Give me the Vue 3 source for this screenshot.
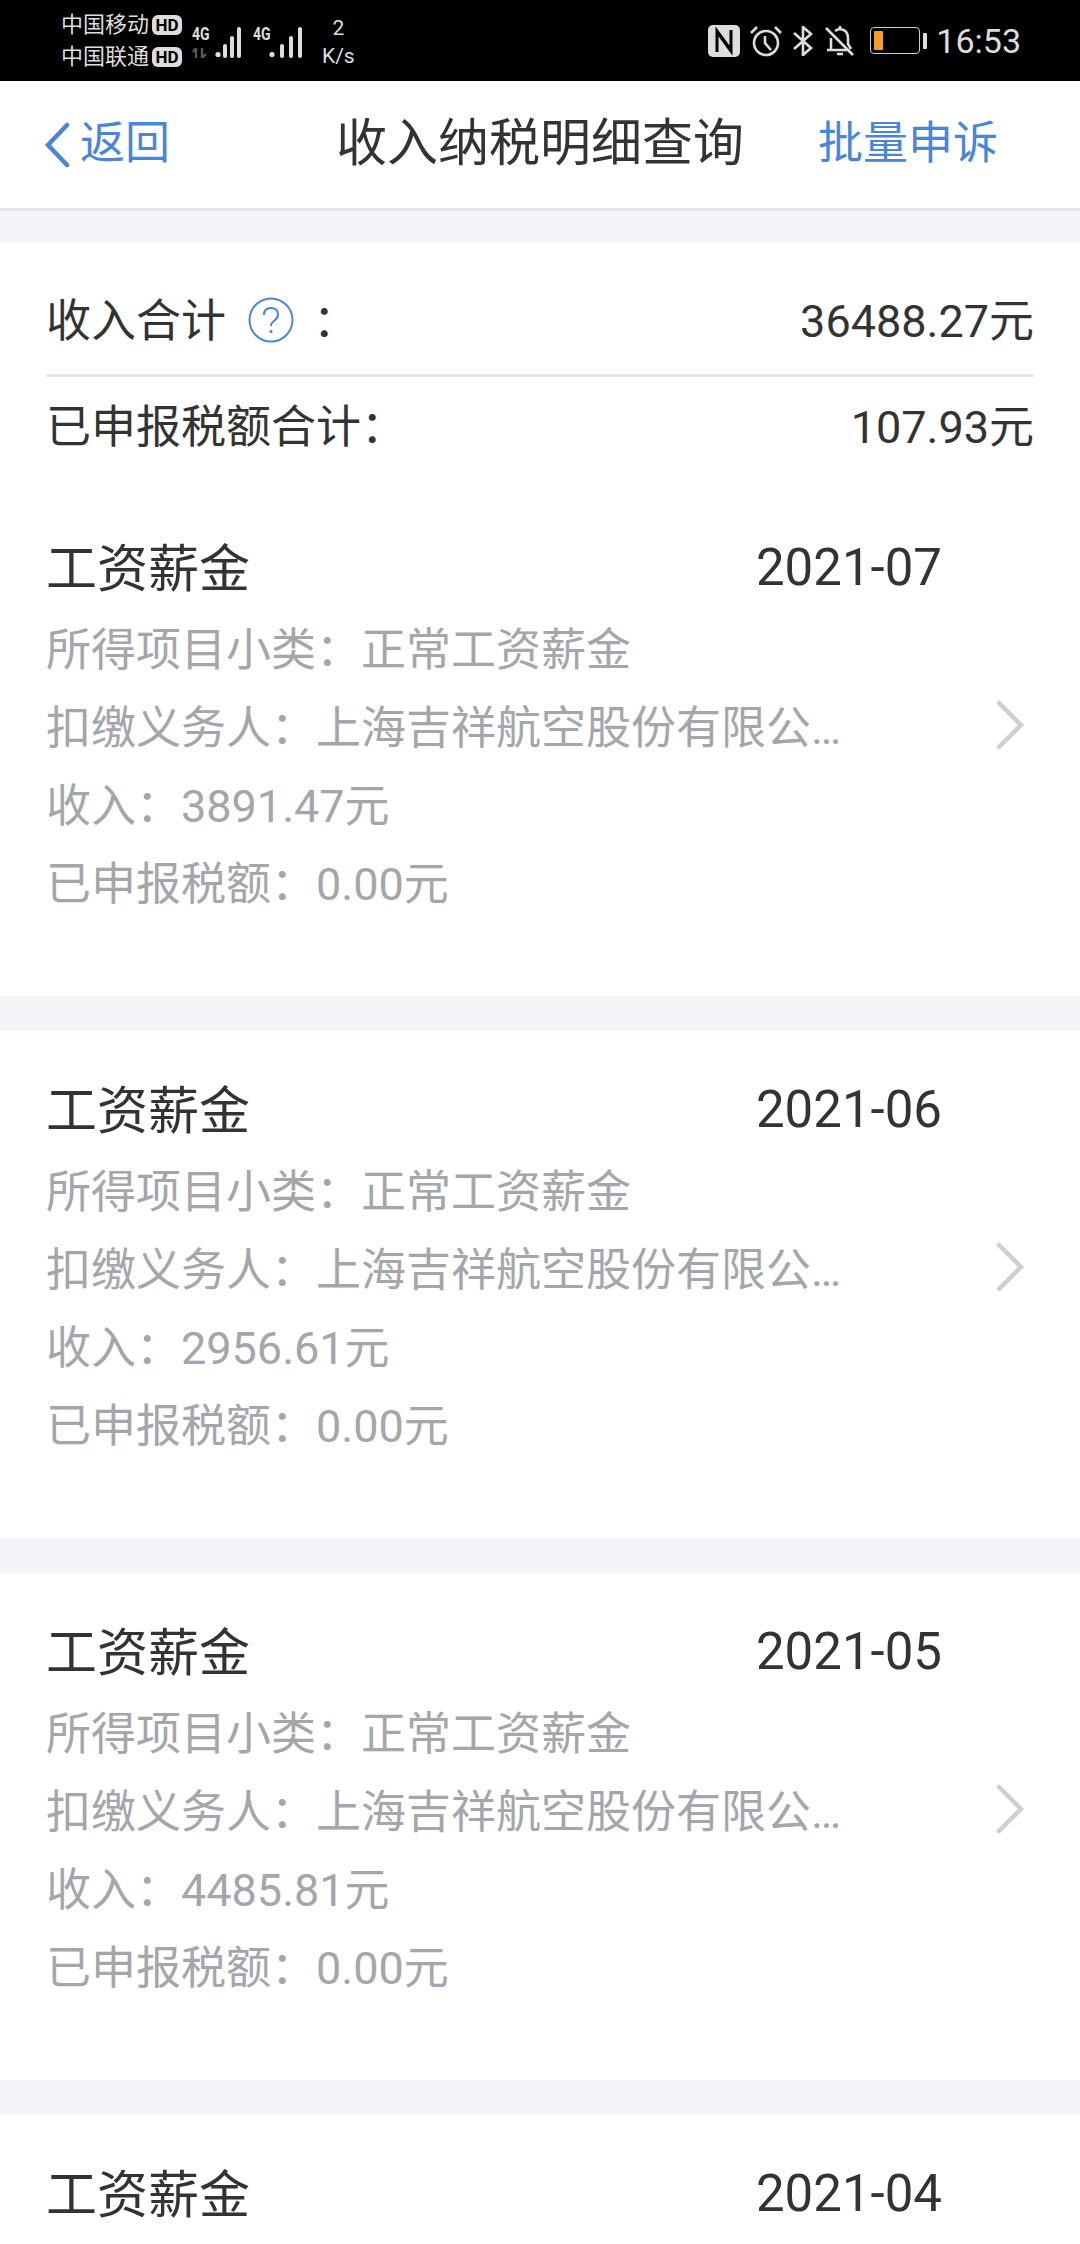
<script setup>
const records = [
	{month: '2021-07', income: '3891.47'},
	{month: '2021-06', income: '2956.61'},
	{month: '2021-05', income: '4485.81'},
	{month: '2021-04'},
];
</script>

<template>
	<div class="page">
		<div class="status">
			<div class="status-left">
				<div class="carriers">
					<div class="carrier"><span>中国移动</span><b class="hd">HD</b></div>
					<div class="carrier"><span>中国联通</span><b class="hd">HD</b></div>
				</div>
				<div class="signal">
					<span class="net">4G</span>
					<svg class="arrows" width="16" height="10" viewBox="0 0 16 10">
						<path d="M4 0 L4 10 M1 4 L4 0 M10 0 L10 10 L14 6" fill="none" stroke="#555" stroke-width="2.4" />
					</svg>
					<svg class="bars" width="26" height="31" viewBox="0 0 26 31">
						<circle cx="3" cy="27.5" r="2.6" fill="#ddd" />
						<rect x="8" y="17" width="4" height="14" rx="2" fill="#ddd" />
						<rect x="15" y="9" width="4" height="22" rx="2" fill="#ddd" />
						<rect x="22" y="0" width="4" height="31" rx="2" fill="#ddd" />
					</svg>
				</div>
				<div class="signal second">
					<span class="net">4G</span>
					<svg class="bars" width="33" height="31" viewBox="0 0 33 31">
						<circle cx="3" cy="27.5" r="2.6" fill="#ddd" />
						<rect x="11" y="17" width="4" height="14" rx="2" fill="#ddd" />
						<rect x="20" y="9" width="4" height="22" rx="2" fill="#ddd" />
						<rect x="29" y="0" width="4" height="31" rx="2" fill="#ddd" />
					</svg>
				</div>
				<div class="speed"><span>2</span><span>K/s</span></div>
			</div>
			<div class="status-right">
				<svg class="ic-nfc" width="32" height="32" viewBox="0 0 32 32">
					<rect x="0" y="0" width="32" height="32" rx="5" fill="#ddd" />
					<path d="M9 27 V6 L22 24 M23 5 V26 L10 8" fill="none" stroke="#000" stroke-width="3" />
				</svg>
				<svg class="ic-alarm" width="32" height="32" viewBox="0 0 32 32" fill="none" stroke="#ddd" stroke-width="2.6">
					<circle cx="16" cy="18" r="12" />
					<path d="M15 11 V18 L21 25 M1 8 L7 2 M31 8 L25 2" />
				</svg>
				<svg class="ic-bt" width="20" height="30" viewBox="0 0 20 30" fill="none" stroke="#ddd" stroke-width="2.6">
					<path d="M1 7 L18 22 L10 29 V1 L18 8 L1 23" />
				</svg>
				<svg class="ic-bell" width="30" height="32" viewBox="0 0 30 32" fill="none" stroke="#ddd" stroke-width="2.6">
					<path d="M2 25 H23 M6 24 V13 M10 6 Q13 4 15 4 Q23 5 23 13 V19 L26 24 M12 29 H18 M15 4 V1 M1 3 L28 30" />
				</svg>
				<div class="battery-wrap">
					<div class="battery"><i class="level"></i></div>
					<i class="cap"></i>
				</div>
				<span class="clock">16:53</span>
			</div>
		</div>

		<div class="nav">
			<div class="back">
				<svg width="26" height="46" viewBox="0 0 26 46">
					<path d="M23 3 L4 23 L23 43" fill="none" stroke="#4a86d8" stroke-width="4.5" stroke-linecap="round" />
				</svg>
				<span class="nav-text">返回</span>
			</div>
			<div class="nav-title nav-text">收入纳税明细查询</div>
			<div class="nav-action nav-text">批量申诉</div>
		</div>

		<div class="summary">
			<div class="sum-row first">
				<div class="sum-label">
					<span>收入合计</span>
					<svg class="help" width="46" height="46" viewBox="0 0 46 46">
						<circle cx="23" cy="23" r="21.5" fill="none" stroke="#4a86d8" stroke-width="2" />
						<path d="M16 18 Q16 11 23 11 Q30 11 30 17.5 Q30 21 26.5 23.5 Q23 26 23 29" fill="none" stroke="#4a86d8" stroke-width="2" />
						<circle cx="23" cy="34.5" r="1.6" fill="#4a86d8" />
					</svg>
					<span class="colon">：</span>
				</div>
				<span>36488.27元</span>
			</div>
			<div class="sum-row second">
				<span>已申报税额合计：</span>
				<span>107.93元</span>
			</div>
		</div>

		<div v-for="r in records" :key="r.month" class="card">
			<div class="card-row">
				<div class="card-body">
					<div class="card-head">
						<span class="card-title">工资薪金</span>
						<span class="card-date">{{ r.month }}</span>
					</div>
					<template v-if="r.income">
						<div class="line">所得项目小类：正常工资薪金</div>
						<div class="line">扣缴义务人：上海吉祥航空股份有限公…</div>
						<div class="line">收入：{{ r.income }}元</div>
						<div class="line">已申报税额：0.00元</div>
					</template>
				</div>
				<svg v-if="r.income" class="chevron" width="30" height="50" viewBox="0 0 30 50">
					<path d="M4 3 L26 25 L4 47" fill="none" stroke="#cfcfcf" stroke-width="4.5" stroke-linecap="round" />
				</svg>
			</div>
		</div>
	</div>
</template>

<style>
body {
	background: #f4f5f9;
}
</style>

<style scoped>
.page {
	width: 1080px;
	height: 2244px;
	overflow: hidden;
	background: #f4f5f9;
	font-family: Roboto, "Noto Sans CJK SC", sans-serif;
	color: #333;
}

.status {
	height: 81px;
	background: #000;
	color: #ddd;
	display: flex;
	justify-content: space-between;
	align-items: center;
	padding: 0 59px 0 61px;
}
.status-left,
.status-right {
	display: flex;
	align-items: center;
}
.carriers {
	display: flex;
	flex-direction: column;
	gap: 3px;
}
.carrier {
	display: flex;
	align-items: center;
	gap: 3px;
	font-size: 22px;
	line-height: 29px;
}
.hd {
	background: #ddd;
	color: #000;
	font-size: 17px;
	line-height: 20px;
	height: 20px;
	width: 30px;
	border-radius: 6px;
	text-align: center;
}
.signal {
	position: relative;
	display: flex;
	align-items: flex-end;
	height: 32px;
	width: 49px;
	margin-left: 10px;
	margin-top: 2px;
	justify-content: flex-end;
}
.signal.second {
	margin-left: 12px;
}
.net {
	position: absolute;
	left: 0;
	top: 0;
	font-size: 18px;
	line-height: 16px;
	font-weight: 700;
	transform: scaleX(0.78);
	transform-origin: left;
}
.arrows {
	position: absolute;
	left: 0;
	bottom: 0;
}
.speed {
	display: flex;
	flex-direction: column;
	align-items: center;
	font-size: 21px;
	line-height: 28px;
	margin-left: 20px;
	margin-top: 2px;
}
.ic-alarm {
	margin-left: 10px;
}
.ic-bt {
	margin-left: 11px;
}
.ic-bell {
	margin-left: 12px;
}
.battery-wrap {
	display: flex;
	align-items: center;
	gap: 3px;
	margin-left: 15px;
}
.battery {
	width: 50px;
	height: 27px;
	border: 1.5px solid #ccc;
	border-radius: 4px;
	padding: 3px;
	box-sizing: border-box;
}
.level {
	display: block;
	width: 9px;
	height: 100%;
	background: #f5a020;
	border-radius: 1px;
}
.cap {
	display: block;
	width: 4px;
	height: 16px;
	background: #ddd;
	border-radius: 1px;
}
.clock {
	font-size: 34px;
	margin-left: 9px;
}

.nav {
	height: 127px;
	background: #fff;
	border-bottom: 3px solid #e4e6eb;
	display: grid;
	grid-template-columns: 292px auto 1fr;
	align-items: center;
	padding: 0 82px 0 44px;
}
.nav-text {
	padding-bottom: 11px;
}
.back {
	display: flex;
	align-items: center;
	gap: 10px;
	font-size: 45px;
	color: #4a86d8;
}
.nav-title {
	font-size: 51px;
	color: #333;
}
.nav-action {
	font-size: 45px;
	color: #4a86d8;
	justify-self: end;
}

.summary {
	margin-top: 31px;
	background: #fff;
	padding: 0 46px;
	height: 247px;
	box-sizing: border-box;
	font-size: 45px;
}
.sum-row {
	display: flex;
	justify-content: space-between;
	align-items: center;
}
.sum-row.first {
	height: 135px;
	padding-top: 19px;
	box-sizing: border-box;
	border-bottom: 3px solid #e4e6eb;
}
.sum-row.second {
	height: 92px;
}
.sum-label {
	display: flex;
	align-items: center;
}
.help {
	margin-left: 22px;
	margin-top: 4px;
}
.colon {
	margin-left: 19px;
}

.card {
	background: #fff;
	padding: 0 55px 72px 46px;
	margin-bottom: 35px;
}
.card-row {
	display: flex;
	align-items: center;
	justify-content: space-between;
	padding-top: 40px;
}
.card-body {
	width: 896px;
}
.card-head {
	display: flex;
	justify-content: space-between;
	align-items: center;
	height: 76px;
	margin-bottom: 7px;
}
.card-title {
	font-size: 51px;
	padding-bottom: 4px;
}
.card-date {
	font-size: 51px;
}
.line {
	font-size: 45px;
	line-height: 78px;
	color: #a3a6ab;
	white-space: nowrap;
}
.chevron {
	margin-bottom: 4px;
}
</style>
